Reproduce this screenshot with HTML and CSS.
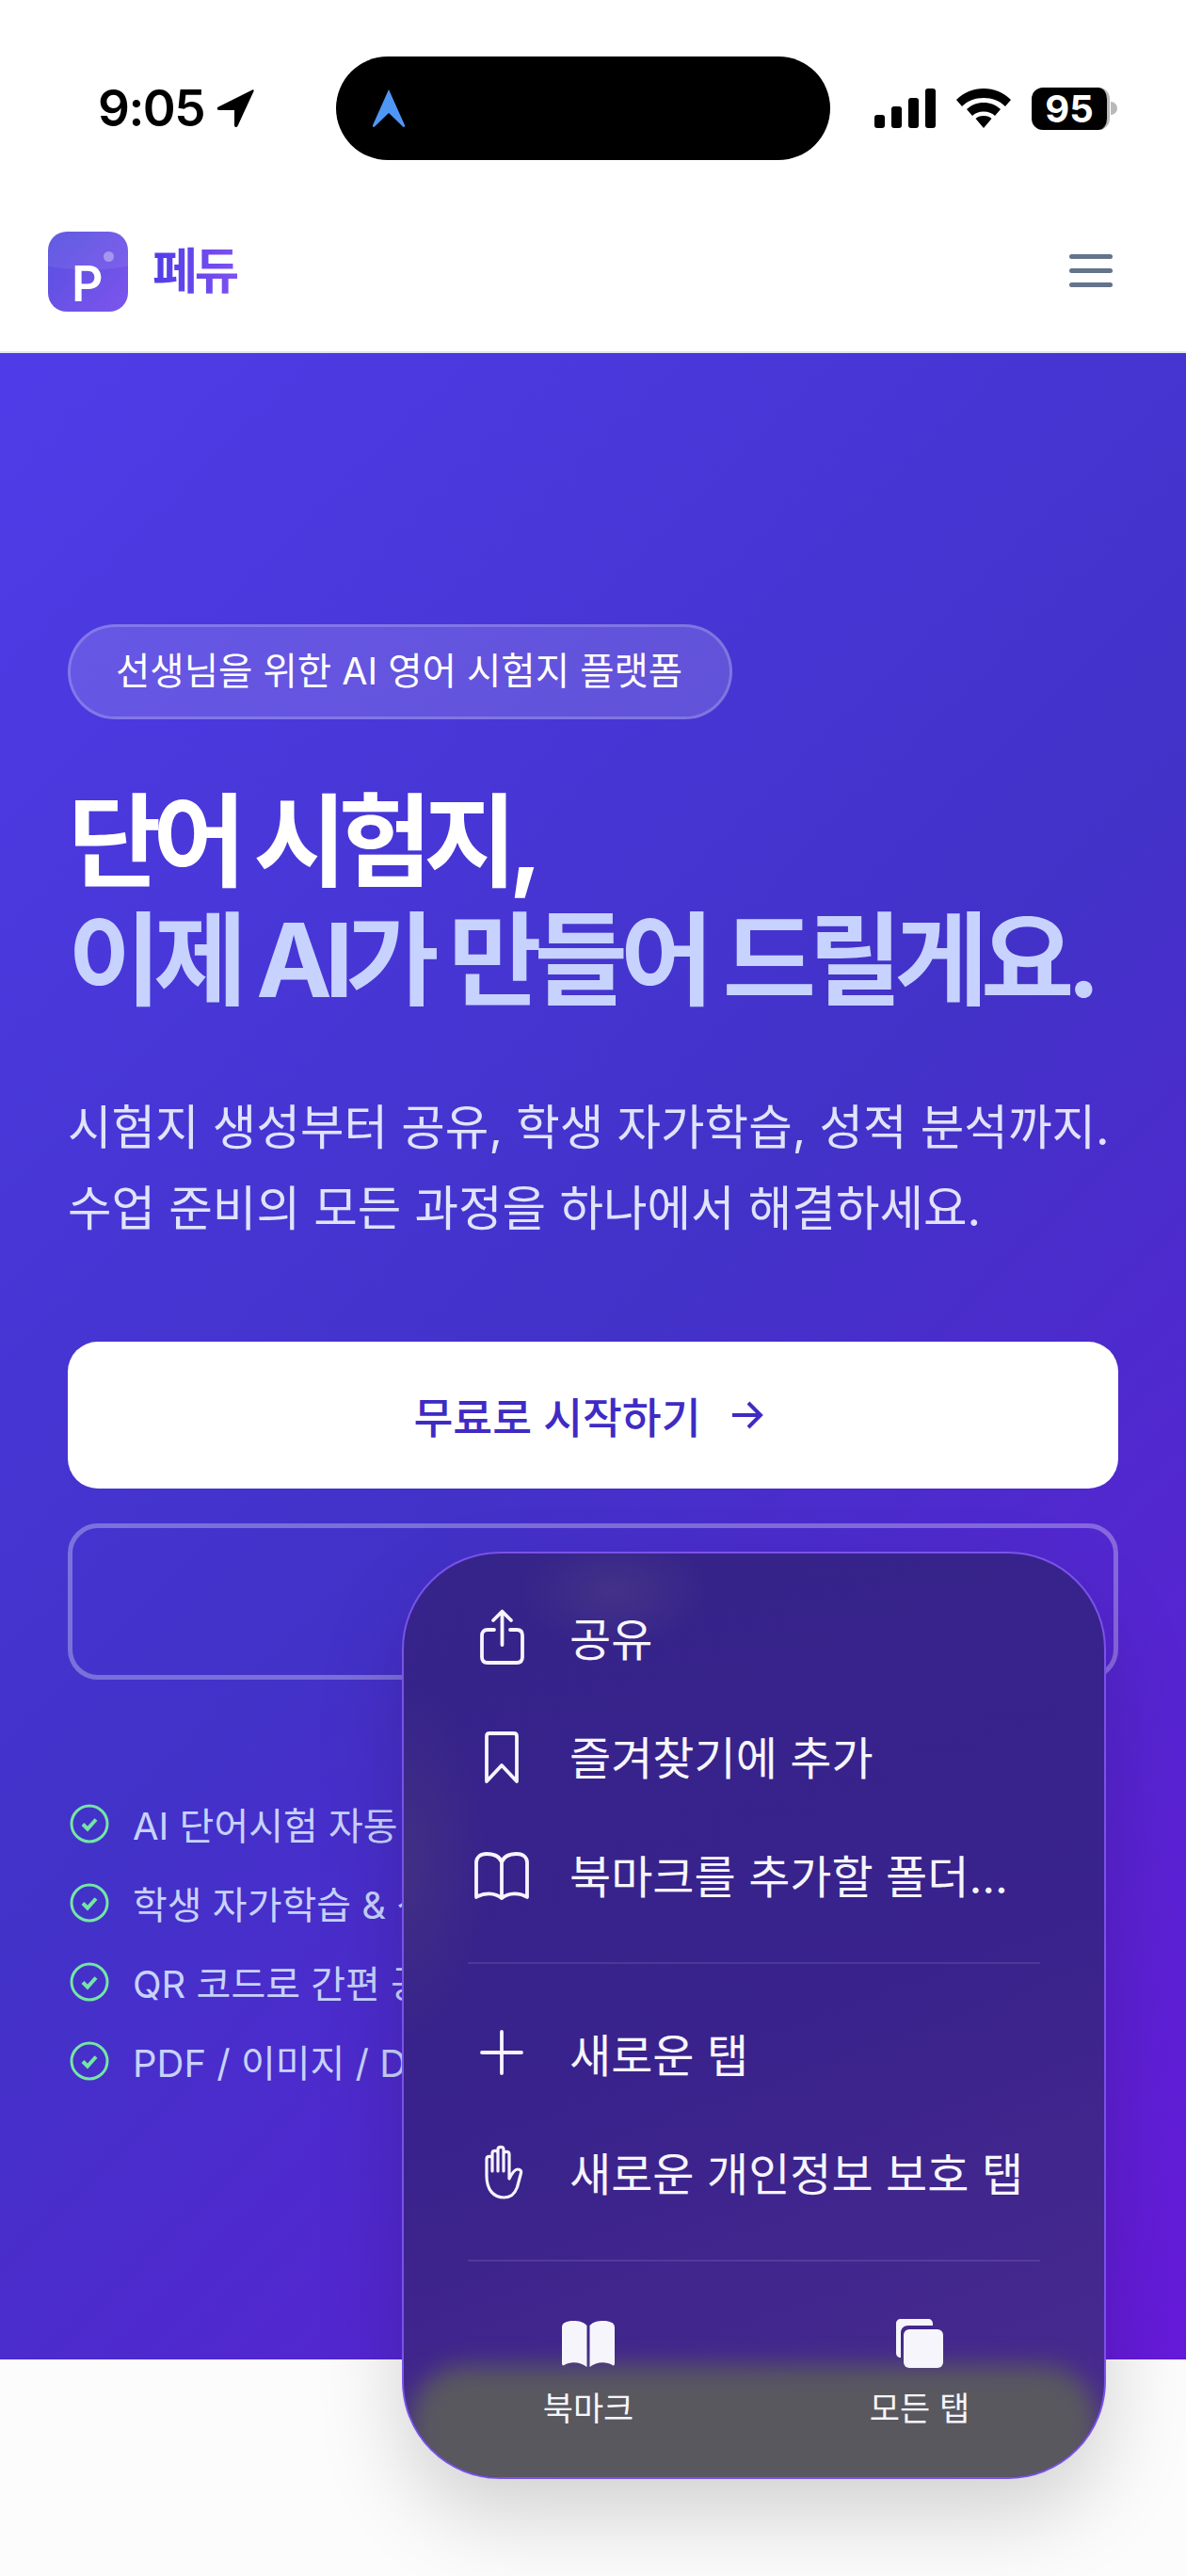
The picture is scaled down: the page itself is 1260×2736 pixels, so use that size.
FILE: index.html
```html
<!DOCTYPE html>
<html lang="ko">
<head>
<meta charset="utf-8">
<title>페듀</title>
<link rel="stylesheet" href="styles.css">
</head>
<body>
<div class="page">
  <div class="status">
    <div class="status-left">
      <span class="time">9:05</span>
      <svg class="loc" viewBox="0 0 40 42"><path d="M38 1.500 2 19.500c-2 1-1.500 3.500.8 3.500H19v16c0 2.300 2.500 2.800 3.500.8L39.500 3c.6-1.200-.3-2-1.500-1.500z"/></svg>
    </div>
    <div class="island">
      <svg class="island-arrow" viewBox="0 0 38 42"><path d="M19 1 36 39c.6 1.500-.8 2.500-2 1.500L19 26 4 40.500c-1.200 1-2.600 0-2-1.500z"/></svg>
    </div>
    <div class="status-right">
      <div class="signal"><i class="b1"></i><i class="b2"></i><i class="b3"></i><i class="b4"></i></div>
      <svg class="wifi" viewBox="0 0 58 42"><path d="M29 0C18 0 8 4 0 12l6 7c6-6 14-9 23-9s17 3 23 9l6-7C50 4 40 0 29 0z"/><path d="M29 15c-7 0-13 2.500-18 7l6 7c3-3 7-4.500 12-4.500S38 26 41 29l6-7c-5-4.500-11-7-18-7z"/><path d="M29 29c-4 0-6.500 1-8.500 3L29 42l8.500-10c-2-2-4.500-3-8.500-3z"/></svg>
      <div class="battery"><span class="battery-body">95</span><span class="battery-tip"></span></div>
    </div>
  </div>

  <header class="nav">
    <div class="brand">
      <div class="logo"><span class="logo-dot"></span><span class="logo-p">P</span></div>
      <span class="brand-name">페듀</span>
    </div>
    <div class="burger"><i></i><i></i><i></i></div>
  </header>

  <section class="hero">
    <div class="pill">선생님을 위한 AI 영어 시험지 플랫폼</div>
    <h1 class="title">단어 시험지,<br><span class="title-soft">이제 AI가 만들어 드릴게요.</span></h1>
    <p class="lead">시험지 생성부터 공유, 학생 자가학습, 성적 분석까지.<br>수업 준비의 모든 과정을 하나에서 해결하세요.</p>
    <div class="btn btn-primary">
      <span>무료로 시작하기</span>
      <svg class="btn-arrow" viewBox="0 0 36 36"><path d="M3 18h30M20 5l13 13-13 13"/></svg>
    </div>
    <div class="btn btn-ghost"></div>
    <ul class="features">
      <li><svg class="check" viewBox="0 0 42 42"><circle cx="21" cy="21" r="19"/><path d="M14 21.500l5 5 9-10"/></svg><span>AI 단어시험 자동 생성</span></li>
      <li><svg class="check" viewBox="0 0 42 42"><circle cx="21" cy="21" r="19"/><path d="M14 21.500l5 5 9-10"/></svg><span>학생 자가학습 &amp; 성적 분석</span></li>
      <li><svg class="check" viewBox="0 0 42 42"><circle cx="21" cy="21" r="19"/><path d="M14 21.500l5 5 9-10"/></svg><span>QR 코드로 간편 공유</span></li>
      <li><svg class="check" viewBox="0 0 42 42"><circle cx="21" cy="21" r="19"/><path d="M14 21.500l5 5 9-10"/></svg><span>PDF / 이미지 / DOCX 내보내기</span></li>
    </ul>
  </section>

  <div class="below"></div>

  <aside class="menu">
    <div class="menu-strip"></div>
    <div class="menu-group">
      <div class="menu-row">
        <svg class="mi" viewBox="0 0 60 60"><path d="M21 23h-7c-4 0-6 2-6 6v23c0 4 2 6 6 6h31c4 0 6-2 6-6V29c0-4-2-6-6-6h-7M29.500 39V5M20 13l9.500-9.500L39 13"/></svg>
        <span>공유</span>
      </div>
      <div class="menu-row">
        <svg class="mi" viewBox="0 0 60 60"><path d="M13 58V10c0-2 1-3 3-3h26c2 0 3 1 3 3v48L29 41z"/></svg>
        <span>즐겨찾기에 추가</span>
      </div>
      <div class="menu-row">
        <svg class="mi" viewBox="0 0 60 60"><path d="M29 18C27 12 21 9 13 9 6 9 2 13 2 18v37c8-5 20-5 27 1 7-6 19-6 27-1V18c0-5-4-9-11-9-8 0-14 3-16 9zM29 18v38"/></svg>
        <span>북마크를 추가할 폴더...</span>
      </div>
    </div>
    <div class="menu-line"></div>
    <div class="menu-group">
      <div class="menu-row">
        <svg class="mi" viewBox="0 0 60 60"><path d="M29 8v44M8 30h42"/></svg>
        <span>새로운 탭</span>
      </div>
      <div class="menu-row">
        <svg class="mi mi-thin" viewBox="0 0 60 60"><path d="M13 35V17c0-3.500 6-3.500 6 0v13V11c0-3.500 6-3.500 6 0v19V7c0-3.500 6-3.500 6 0v23V12c0-3.500 6-3.500 6 0v26c2-4 5-10 9-10 3 0 4 2 3.500 4l-4 15c-3 8-7 11-14 11-11 0-18.500-8-18.500-23z"/></svg>
        <span>새로운 개인정보 보호 탭</span>
      </div>
    </div>
    <div class="menu-line"></div>
    <div class="menu-tabs">
      <div class="menu-tab">
        <svg class="ti" viewBox="0 0 60 50"><path d="M28.500 6C25 2 20 1 14 1 7 1 2 3 2 8v38c0 2 1 3 2.500 2 6-4 17-4 24 2zM31.500 6C35 2 40 1 46 1c7 0 12 2 12 7v38c0 2-1 3-2.500 2-6-4-17-4-24 2z"/></svg>
        <span>북마크</span>
      </div>
      <div class="menu-tab">
        <svg class="ti" viewBox="0 0 60 54"><path d="M10 42c-3 0-5-2-5-5V6c0-3 2-5 5-5h29c3 0 5 2 5 5v2H18c-5 0-8 3-8 8z"/><rect x="13" y="12" width="42" height="41" rx="6"/></svg>
        <span>모든 탭</span>
      </div>
    </div>
  </aside>
</div>
</body>
</html>
```

FILE: styles.css
```css
* { box-sizing: border-box; }
html, body { margin: 0; padding: 0; }
body {
  font-family: "Inter", "Noto Sans CJK KR", "Noto Sans", sans-serif;
  background: #fff;
  color: #111;
}
.page {
  position: relative;
  width: 1260px;
  height: 2736px;
  overflow: hidden;
  display: flex;
  flex-direction: column;
}

/* status bar */
.status {
  height: 202px;
  padding: 60px 73px 0 104px;
  display: flex;
  align-items: flex-start;
  justify-content: space-between;
  flex: none;
}
.status-left { display: flex; align-items: center; gap: 13px; height: 110px; width: 170px; }
.time { font-size: 53px; font-weight: 600; color: #000; letter-spacing: -1.500px; }
.loc { width: 40px; height: 42px; fill: #000; }
.island {
  width: 525px;
  height: 110px;
  margin-left: 81px;
  background: #000;
  border-radius: 55px;
  display: flex;
  align-items: center;
  padding-left: 37px;
}
.island-arrow { width: 38px; height: 42px; fill: #4f97f7; }
.status-right { display: flex; align-items: center; gap: 22px; height: 110px; margin-left: 45px; }
.signal { display: flex; align-items: flex-end; gap: 7px; height: 42px; }
.signal i { display: block; width: 11px; background: #000; border-radius: 3px; }
.signal .b1 { height: 14px; }
.signal .b2 { height: 23px; }
.signal .b3 { height: 32px; }
.signal .b4 { height: 42px; }
.wifi { width: 58px; height: 42px; fill: #000; }
.battery { display: flex; align-items: center; gap: 1px; }
.battery-body {
  width: 83px;
  height: 45px;
  background: #000;
  border-radius: 12px;
  border-right: 3px solid #b9b9b9;
  color: #fff;
  font-size: 40px;
  font-weight: 700;
  line-height: 45px;
  text-align: center;
}
.battery-tip { width: 7px; height: 14px; background: #b9b9b9; border-radius: 0 7px 7px 0; }

/* nav */
.nav {
  height: 173px;
  flex: none;
  padding: 44px 78px 0 51px;
  display: flex;
  align-items: flex-start;
  justify-content: space-between;
  border-bottom: 2px solid #e2e8f0;
}
.brand { display: flex; align-items: center; gap: 26px; }
.logo {
  position: relative;
  width: 85px;
  height: 85px;
  border-radius: 20px;
  background:
    radial-gradient(120% 48% at 50% 0%, rgba(255,255,255,.07) 98%, transparent 100%),
    linear-gradient(135deg, #564fe0, #7d55ec);
}
.logo-dot {
  position: absolute;
  left: 59px;
  top: 21px;
  width: 11px;
  height: 11px;
  border-radius: 50%;
  background: rgba(255,255,255,.35);
}
.logo-p {
  position: absolute;
  left: 25px;
  top: 32px;
  font-size: 52px;
  line-height: 48px;
  font-weight: 600;
  color: #fff;
}
.brand-name {
  font-size: 52px;
  line-height: 60px;
  font-weight: 700;
  letter-spacing: -3px;
  background: linear-gradient(90deg, #4f3de8, #7f50f2);
  -webkit-background-clip: text;
  background-clip: text;
  color: transparent;
}
.burger { margin-top: 24px; width: 46px; display: flex; flex-direction: column; gap: 10px; }
.burger i { display: block; height: 5px; border-radius: 3px; background: #64748b; }

/* hero */
.hero {
  height: 2131px;
  flex: none;
  padding: 288px 72px 0;
  background: linear-gradient(135deg, #4f3ce8 0%, #4232c8 50%, #661ad9 100%);
  color: #fff;
}
.pill {
  display: inline-block;
  height: 101px;
  padding: 0 50px 0 48px;
  line-height: 95px;
  border: 3px solid rgba(255,255,255,.2);
  border-radius: 51px;
  background: rgba(255,255,255,.15);
  font-size: 39.500px;
  font-weight: 400;
}
.title {
  margin: 67px 0 0;
  font-size: 108px;
  line-height: 126px;
  font-weight: 700;
  letter-spacing: -9px;
  white-space: nowrap;
}
.title-soft { color: #c7d2fe; letter-spacing: -8px; }
.lead {
  margin: 72px 0 0;
  font-size: 50.600px;
  line-height: 86px;
  color: #e0e3fb;
  white-space: nowrap;
}
.btn {
  height: 156px;
  margin-top: 98px;
  border-radius: 32px;
  display: flex;
  align-items: center;
  justify-content: center;
  gap: 30px;
  font-size: 45.500px;
  font-weight: 500;
}
.btn-primary { background: #fff; color: #3f2bc4; padding-right: 10px; }
.btn-arrow { width: 36px; height: 36px; fill: none; stroke: #3f2bc4; stroke-width: 4; }
.btn-ghost {
  height: 166px;
  margin-top: 37px;
  border: 5px solid rgba(255,255,255,.3);
}
.features {
  list-style: none;
  margin: 129px 0 0;
  padding: 0;
  display: flex;
  flex-direction: column;
  gap: 36px;
}
.features li {
  height: 48px;
  display: flex;
  align-items: center;
  gap: 25px;
  font-size: 40px;
  color: #c7d2fe;
  white-space: nowrap;
}
.check { width: 42px; height: 42px; margin-left: 2px; flex: none; fill: none; stroke: #74e6a4; stroke-width: 3; }
.check path { stroke-width: 4; }

.below { flex: 1; background: #fcfcfc; }

/* floating menu */
.menu {
  position: absolute;
  left: 427px;
  top: 1648px;
  width: 748px;
  height: 985px;
  border: 2px solid #7a52e8;
  border-radius: 104px;
  overflow: hidden;
  background:
    radial-gradient(100px 60px at 223px 40px, rgba(120,110,120,.2), transparent),
    radial-gradient(90px 190px at 0px 330px, rgba(100,90,110,.22), transparent),
    linear-gradient(160deg, #35248a 0%, #39228c 50%, #4a2b8e 100%);
  color: #fff;
  box-shadow: 0 40px 90px rgba(0,0,0,.17);
  padding: 38px 68px 0;
}
.menu-strip {
  position: absolute;
  left: 6px;
  right: 6px;
  top: 862px;
  height: 170px;
  border-radius: 60px;
  background: #59585f;
  filter: blur(13px);
}
.menu-group { position: relative; display: flex; flex-direction: column; gap: 26px; }
.menu-row {
  height: 100px;
  display: flex;
  align-items: center;
  gap: 52px;
  font-size: 48px;
  color: #f6f5fc;
  white-space: nowrap;
}
.mi {
  width: 60px;
  height: 60px;
  flex: none;
  margin-left: 7px;
  margin-right: -11px;
  fill: none;
  stroke: #f6f5fc;
  stroke-width: 3.800;
  stroke-linejoin: round;
  stroke-linecap: round;
}
.mi-thin { stroke-width: 3.200; }
.menu-line { position: relative; height: 2px; margin: 44px 0 44px; background: rgba(255,255,255,.1); }
.menu-tabs { position: relative; display: flex; justify-content: space-between; padding: 16px 18px 0; }
.menu-tab {
  width: 220px;
  display: flex;
  flex-direction: column;
  align-items: center;
  gap: 14px;
  font-size: 35px;
  color: #f6f5fc;
  white-space: nowrap;
}
.ti { width: 60px; height: 54px; fill: #f6f5fc; }
```
